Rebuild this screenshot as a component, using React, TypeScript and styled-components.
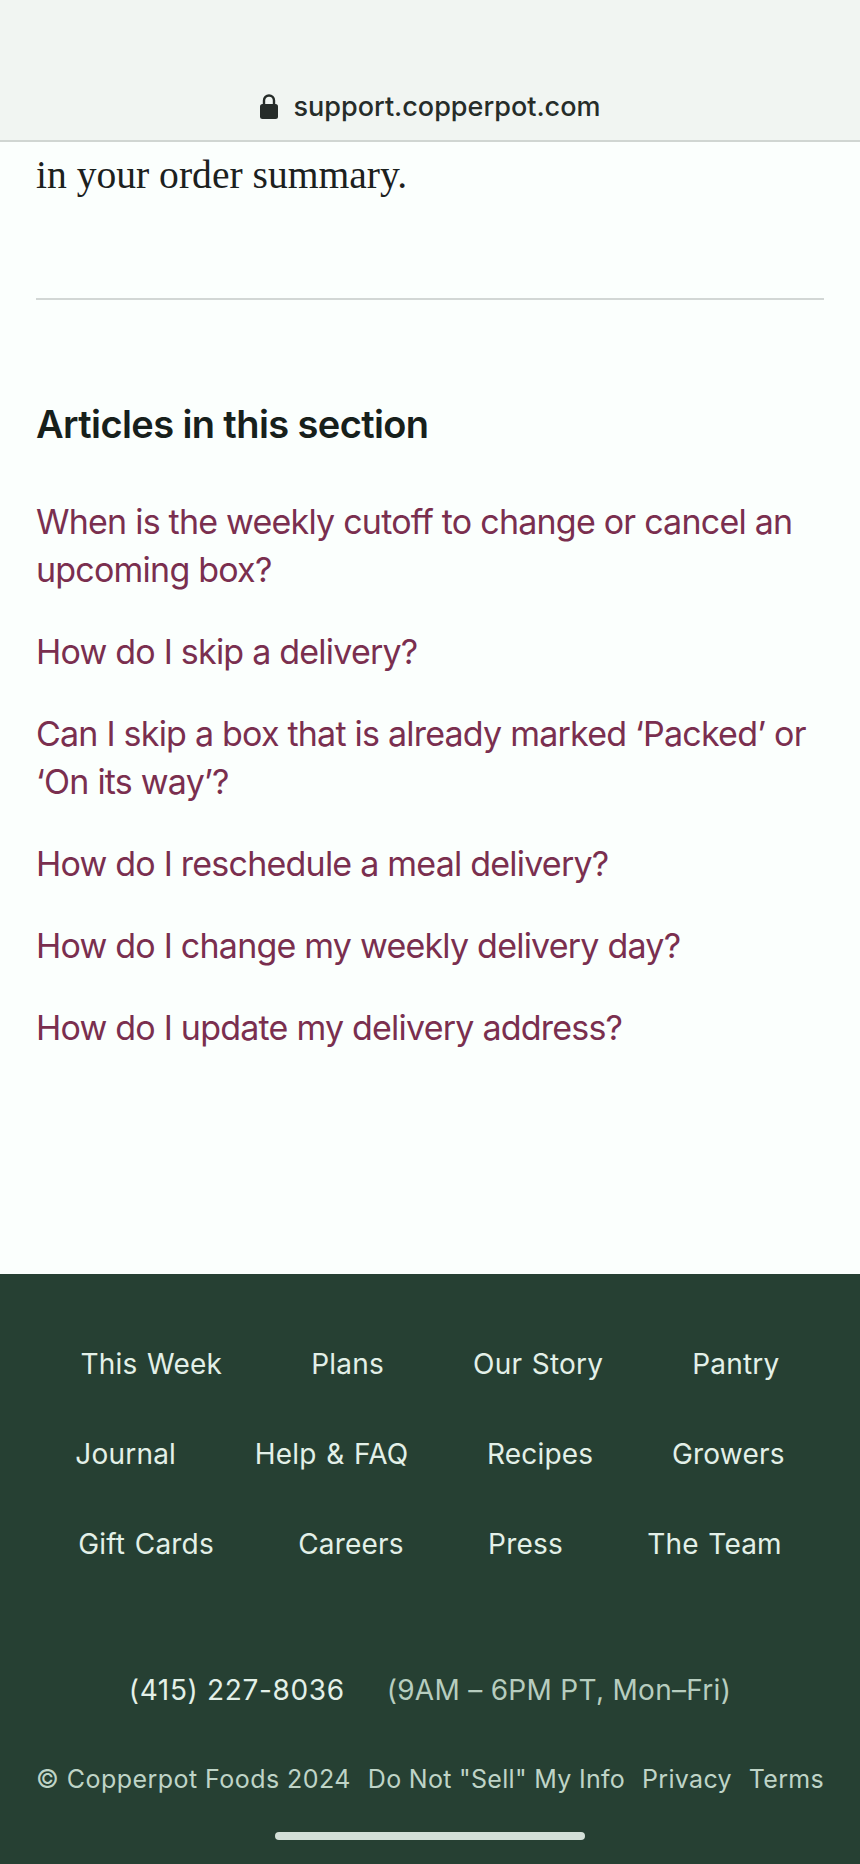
import React from "react";
import styled, { createGlobalStyle } from "styled-components";

const Global = createGlobalStyle`
  html, body { margin: 0; padding: 0; background: #fbfffd; }
  a { text-decoration: none; color: inherit; }
`;
const Page = styled.div`
  width: 860px; height: 1864px; display: flex; flex-direction: column; overflow: hidden;
  background: #fbfffd; font-family: Inter, "Liberation Sans", sans-serif;
`;
const AddressBar = styled.header`
  height: 142px; box-sizing: border-box; flex: none; background: #f1f5f2;
  border-bottom: 2px solid #d0d6d2; display: flex; align-items: flex-end; justify-content: center;
  gap: 16px; padding-bottom: 17px; color: #262c29;
`;
const Url = styled.span`
  font-size: 27px; line-height: 32px; font-weight: 550; letter-spacing: 0;
`;
const Main = styled.main`
  flex: 1; padding: 0 36px; display: flex; flex-direction: column;
`;
const Lead = styled.p`
  margin: 9px 0 0; font-family: "Liberation Serif", serif; font-size: 39.6px; line-height: 48px; color: #1c211e;
`;
const Rule = styled.hr`
  margin: 99px 0 0; border: 0; height: 2px; background: #d2d7d5;
`;
const Heading = styled.h2`
  margin: 100px 0 0; font-size: 38px; line-height: 48px; font-weight: 600; letter-spacing: -0.6px; color: #17201b;
`;
const LinkList = styled.ul`
  margin: 50px 0 0; padding: 0; list-style: none; display: flex; flex-direction: column; gap: 34px;
`;
const ArticleLink = styled.a`
  display: block; font-size: 34px; line-height: 48px; font-weight: 370; color: #7a2f4f; letter-spacing: -0.78px;
`;
const Footer = styled.footer`
  flex: none; height: 590px; box-sizing: border-box; background: #264033; padding: 0 36px; position: relative;
  color: #e3f0e8;
`;
const NavRows = styled.nav`
  padding-top: 70px; display: flex; flex-direction: column; gap: 50px;
`;
const NavRow = styled.div`
  display: flex; justify-content: space-around; font-size: 28px; line-height: 40px; font-weight: 370;
  letter-spacing: 0.2px; word-spacing: 1.5px;
`;
const Contact = styled.div`
  margin-top: 106px; display: flex; justify-content: center; gap: 42px; font-size: 28px; line-height: 40px; font-weight: 370;
`;
const Phone = styled.span` letter-spacing: 0.65px; `;
const Hours = styled.span` color: #b7cdbf; letter-spacing: 0.3px; `;
const Legal = styled.div`
  margin-top: 49px; display: flex; justify-content: space-between; font-size: 25px; line-height: 40px; font-weight: 370;
  color: #bfd4c7; letter-spacing: 0.3px;
`;
const Copyright = styled.span` letter-spacing: 0.45px; `;
const HomeBar = styled.div`
  position: absolute; left: 275px; bottom: 24px; width: 310px; height: 8px; border-radius: 4px; background: #d3e0d8;
`;

const articles = [
  "When is the weekly cutoff to change or cancel an upcoming box?",
  "How do I skip a delivery?",
  "Can I skip a box that is already marked ‘Packed’ or ‘On its way’?",
  "How do I reschedule a meal delivery?",
  "How do I change my weekly delivery day?",
  "How do I update my delivery address?",
];
const nav = [
  ["This Week", "Plans", "Our Story", "Pantry"],
  ["Journal", "Help & FAQ", "Recipes", "Growers"],
  ["Gift Cards", "Careers", "Press", "The Team"],
];

const Lock = () => (
  <svg width="18" height="25" viewBox="0 0 18 25" fill="none" style={{ marginBottom: 4 }}>
    <path d="M4 11V6.5a5 5 0 0 1 10 0V11" stroke="currentColor" strokeWidth="2.4" />
    <rect x="0" y="10" width="18" height="15" rx="2.5" fill="currentColor" />
  </svg>
);

export default function App() {
  return (
    <Page>
      <Global />
      <AddressBar>
        <Lock />
        <Url>support.copperpot.com</Url>
      </AddressBar>
      <Main>
        <Lead>in your order summary.</Lead>
        <Rule />
        <Heading>Articles in this section</Heading>
        <LinkList>
          {articles.map((a) => (
            <li key={a}><ArticleLink href="#">{a}</ArticleLink></li>
          ))}
        </LinkList>
      </Main>
      <Footer>
        <NavRows>
          {nav.map((row) => (
            <NavRow key={row[0]}>
              {row.map((n) => <a key={n} href="#">{n}</a>)}
            </NavRow>
          ))}
        </NavRows>
        <Contact>
          <Phone>(415) 227-8036</Phone>
          <Hours>(9AM – 6PM PT, Mon–Fri)</Hours>
        </Contact>
        <Legal>
          <Copyright>© Copperpot Foods 2024</Copyright>
          <a href="#">Do Not "Sell" My Info</a>
          <a href="#">Privacy</a>
          <a href="#">Terms</a>
        </Legal>
        <HomeBar />
      </Footer>
    </Page>
  );
}
